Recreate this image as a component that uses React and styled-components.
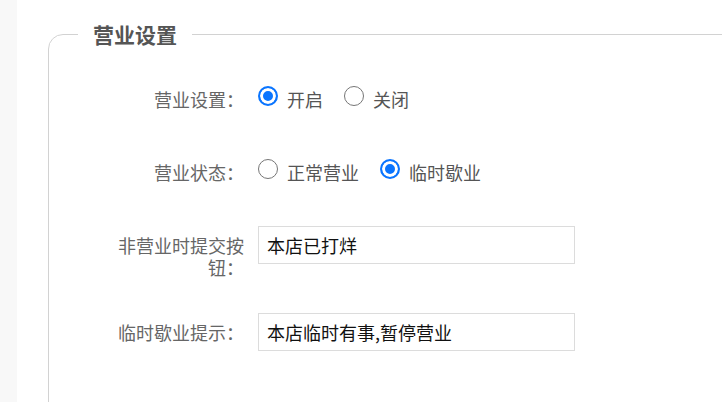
import styled, {createGlobalStyle} from 'styled-components';

const GlobalStyle = createGlobalStyle`
  html, body {
    margin: 0;
    padding: 0;
    background: #fff;
    font-family: "Noto Sans CJK SC", "Noto Sans", sans-serif;
  }
`;

const Page = styled.div`
  display: flex;
  width: 722px;
  height: 402px;
  overflow: hidden;
`;

const Side = styled.div`
  width: 17px;
  flex: none;
  background: #f8f8f8;
`;

const Main = styled.div`
  flex: 1;
  padding: 20px 0 0 31px;
  overflow: hidden;
`;

const Fieldset = styled.fieldset`
  margin: 0 -20px 0 0;
  padding: 32px 0 60px 0;
  border: 1px solid #d2d2d2;
  border-radius: 15px;
  min-height: 340px;
`;

const Legend = styled.legend`
  margin-left: 29px;
  padding: 0 15px;
  font-size: 21px;
  line-height: 28px;
  font-weight: 700;
  color: #555;
`;

const Form = styled.div`
  padding-left: 65px;
`;

const Row = styled.div`
  display: flex;
  align-items: flex-start;
  min-height: 38px;
  margin-bottom: 35px;
`;

const Label = styled.div`
  width: 144px;
  flex: none;
  box-sizing: border-box;
  padding: 8px 14px 0 0;
  text-align: right;
  font-size: 18px;
  line-height: 22px;
  color: #666;
`;

const Options = styled.div`
  font-size: 18px;
  line-height: 38px;
  color: #555;
  white-space: nowrap;
`;

const Option = styled.label`
  margin-right: 21px;
`;

const Radio = styled.input`
  appearance: none;
  box-sizing: border-box;
  width: 20px;
  height: 20px;
  margin: 0 9px 0 0;
  vertical-align: 1px;
  border: 1.5px solid #767676;
  border-radius: 50%;
  background: #fff;

  &:checked {
    border: 2px solid #0a75ff;
    background: #0a75ff;
    box-shadow: inset 0 0 0 3px #fff;
  }
`;

const TextInput = styled.input`
  width: 317px;
  height: 38px;
  box-sizing: border-box;
  border: 1px solid #dcdcdc;
  padding: 0 8px;
  font-family: inherit;
  font-size: 18px;
  color: #111;
  outline: none;
`;

function RadioRow({label, name, options, value}) {
  return (
    <Row>
      <Label>{label}</Label>
      <Options>
        {options.map((opt) => (
          <Option key={opt}>
            <Radio type="radio" name={name} defaultChecked={opt === value} />
            {opt}
          </Option>
        ))}
      </Options>
    </Row>
  );
}

export default function App() {
  return (
    <Page>
      <GlobalStyle />
      <Side />
      <Main>
        <Fieldset>
          <Legend>营业设置</Legend>
          <Form>
            <RadioRow label="营业设置：" name="open" options={['开启', '关闭']} value="开启" />
            <RadioRow label="营业状态：" name="status" options={['正常营业', '临时歇业']} value="临时歇业" />
            <Row>
              <Label>非营业时提交按钮：</Label>
              <TextInput defaultValue="本店已打烊" />
            </Row>
            <Row>
              <Label>临时歇业提示：</Label>
              <TextInput defaultValue="本店临时有事,暂停营业" />
            </Row>
          </Form>
        </Fieldset>
      </Main>
    </Page>
  );
}
